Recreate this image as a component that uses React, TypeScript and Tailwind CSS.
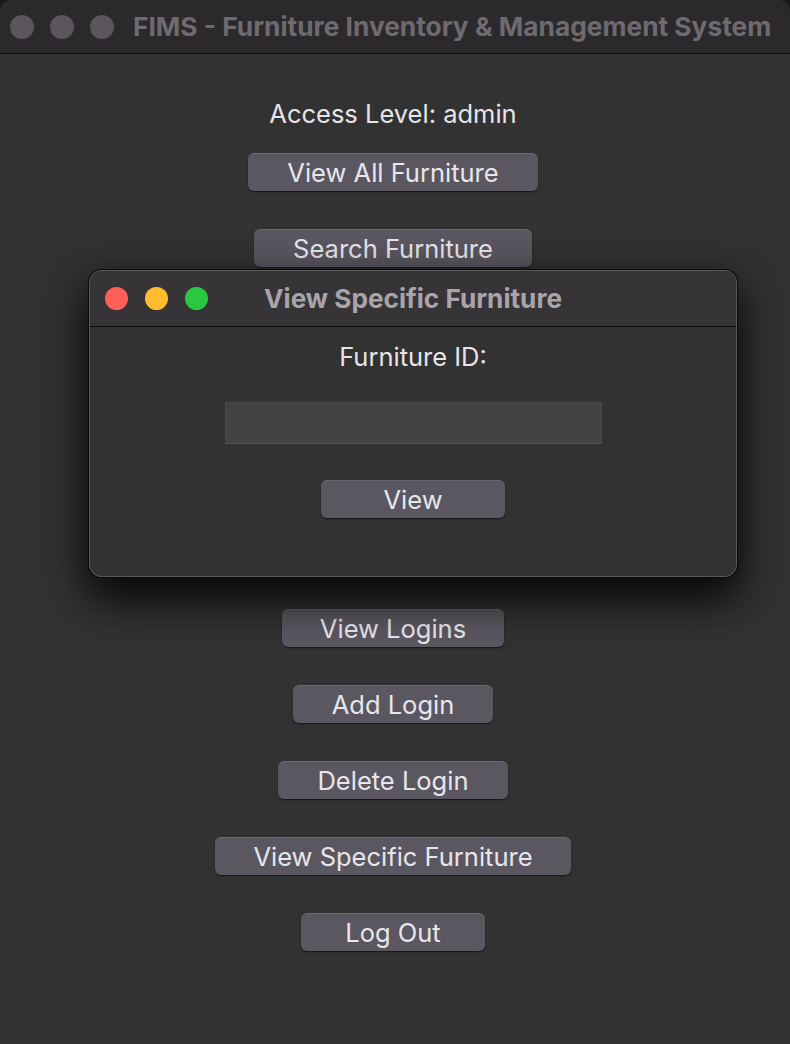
import React from "react";

const font = { fontFamily: "Inter, 'Noto Sans', 'Liberation Sans', sans-serif" };

function Btn({ label, w, hidden }: { label: string; w: string; hidden?: boolean }) {
  return (
    <div
      className={`${w} ${hidden ? "invisible" : ""} h-[38px] rounded-[6px] bg-[#5a5760] border-t border-[#6a6770] shadow-[0_1px_1.5px_rgba(0,0,0,0.6)] flex items-center justify-center text-[25.5px] text-[#e8e6ea] leading-none`}
    >
      {label}
    </div>
  );
}

function Light({ c }: { c: string }) {
  return <div className={`w-[23px] h-[23px] rounded-full ${c}`} />;
}

export default function App() {
  return (
    <div className="w-[790px] h-[1044px] bg-[#1a1a1a] overflow-hidden" style={font}>
      <div className="relative w-full h-full rounded-t-[12px] overflow-hidden bg-[#323232] flex flex-col">
        {/* title bar */}
        <div className="h-[54px] bg-[#2c292d] border-b border-[#101010] flex items-center shrink-0">
          <div className="flex items-center gap-[16px] pl-[10px]">
            <div className="w-[24px] h-[24px] rounded-full bg-[#5a565c]" />
            <div className="w-[24px] h-[24px] rounded-full bg-[#5a565c]" />
            <div className="w-[24px] h-[24px] rounded-full bg-[#5a565c]" />
          </div>
          <div className="ml-[19px] text-[26.3px] font-bold text-[#6e6a70] whitespace-nowrap">
            FIMS - Furniture Inventory &amp; Management System
          </div>
        </div>

        {/* body */}
        <div className="flex flex-col items-center pt-[46px] pr-[4px]">
          <div className="h-[28px] flex items-center text-[25.5px] text-[#e6e4e8]">
            Access Level: admin
          </div>
          <div className="mt-[25px] flex flex-col items-center gap-[38px]">
            <Btn label="View All Furniture" w="w-[290px]" />
            <Btn label="Search Furniture" w="w-[278px]" />
            <Btn label="Add Furniture" w="w-[250px]" hidden />
            <Btn label="Update Furniture" w="w-[270px]" hidden />
            <Btn label="Delete Furniture" w="w-[266px]" hidden />
            <Btn label="Generate Report" w="w-[266px]" hidden />
            <Btn label="View Logins" w="w-[222px]" />
            <Btn label="Add Login" w="w-[200px]" />
            <Btn label="Delete Login" w="w-[230px]" />
            <Btn label="View Specific Furniture" w="w-[356px]" />
            <Btn label="Log Out" w="w-[184px]" />
          </div>
        </div>

        {/* dialog window */}
        <div className="absolute left-[89px] top-[270px] w-[648px] h-[307px] rounded-[12px] bg-[#323232] border border-[#5a5a5a] shadow-[0_0_0_1px_#0a0a0a,0_24px_40px_rgba(0,0,0,0.7),0_8px_40px_rgba(0,0,0,0.45)] overflow-hidden flex flex-col">
          <div className="relative h-[56px] bg-[#373438] border-b border-[#0e0e0e] flex items-center shrink-0">
            <div className="flex items-center gap-[17px] pl-[15px]">
              <Light c="bg-[#fe5f57]" />
              <Light c="bg-[#febc2e]" />
              <Light c="bg-[#28c840]" />
            </div>
            <div className="absolute inset-0 flex items-center justify-center text-[26.2px] font-bold text-[#a8a4a9]">
              View Specific Furniture
            </div>
          </div>
          <div className="flex flex-col items-center pt-[16px]">
            <div className="h-[28px] flex items-center text-[25.5px] text-[#e6e4e8]">
              Furniture ID:
            </div>
            <div className="mt-[31px] w-[377px] h-[42px] bg-[#434343] border border-[#4b4b4b] border-b-[#575757]" />
            <div className="mt-[36px]">
              <Btn label="View" w="w-[184px]" />
            </div>
          </div>
        </div>
      </div>
    </div>
  );
}
